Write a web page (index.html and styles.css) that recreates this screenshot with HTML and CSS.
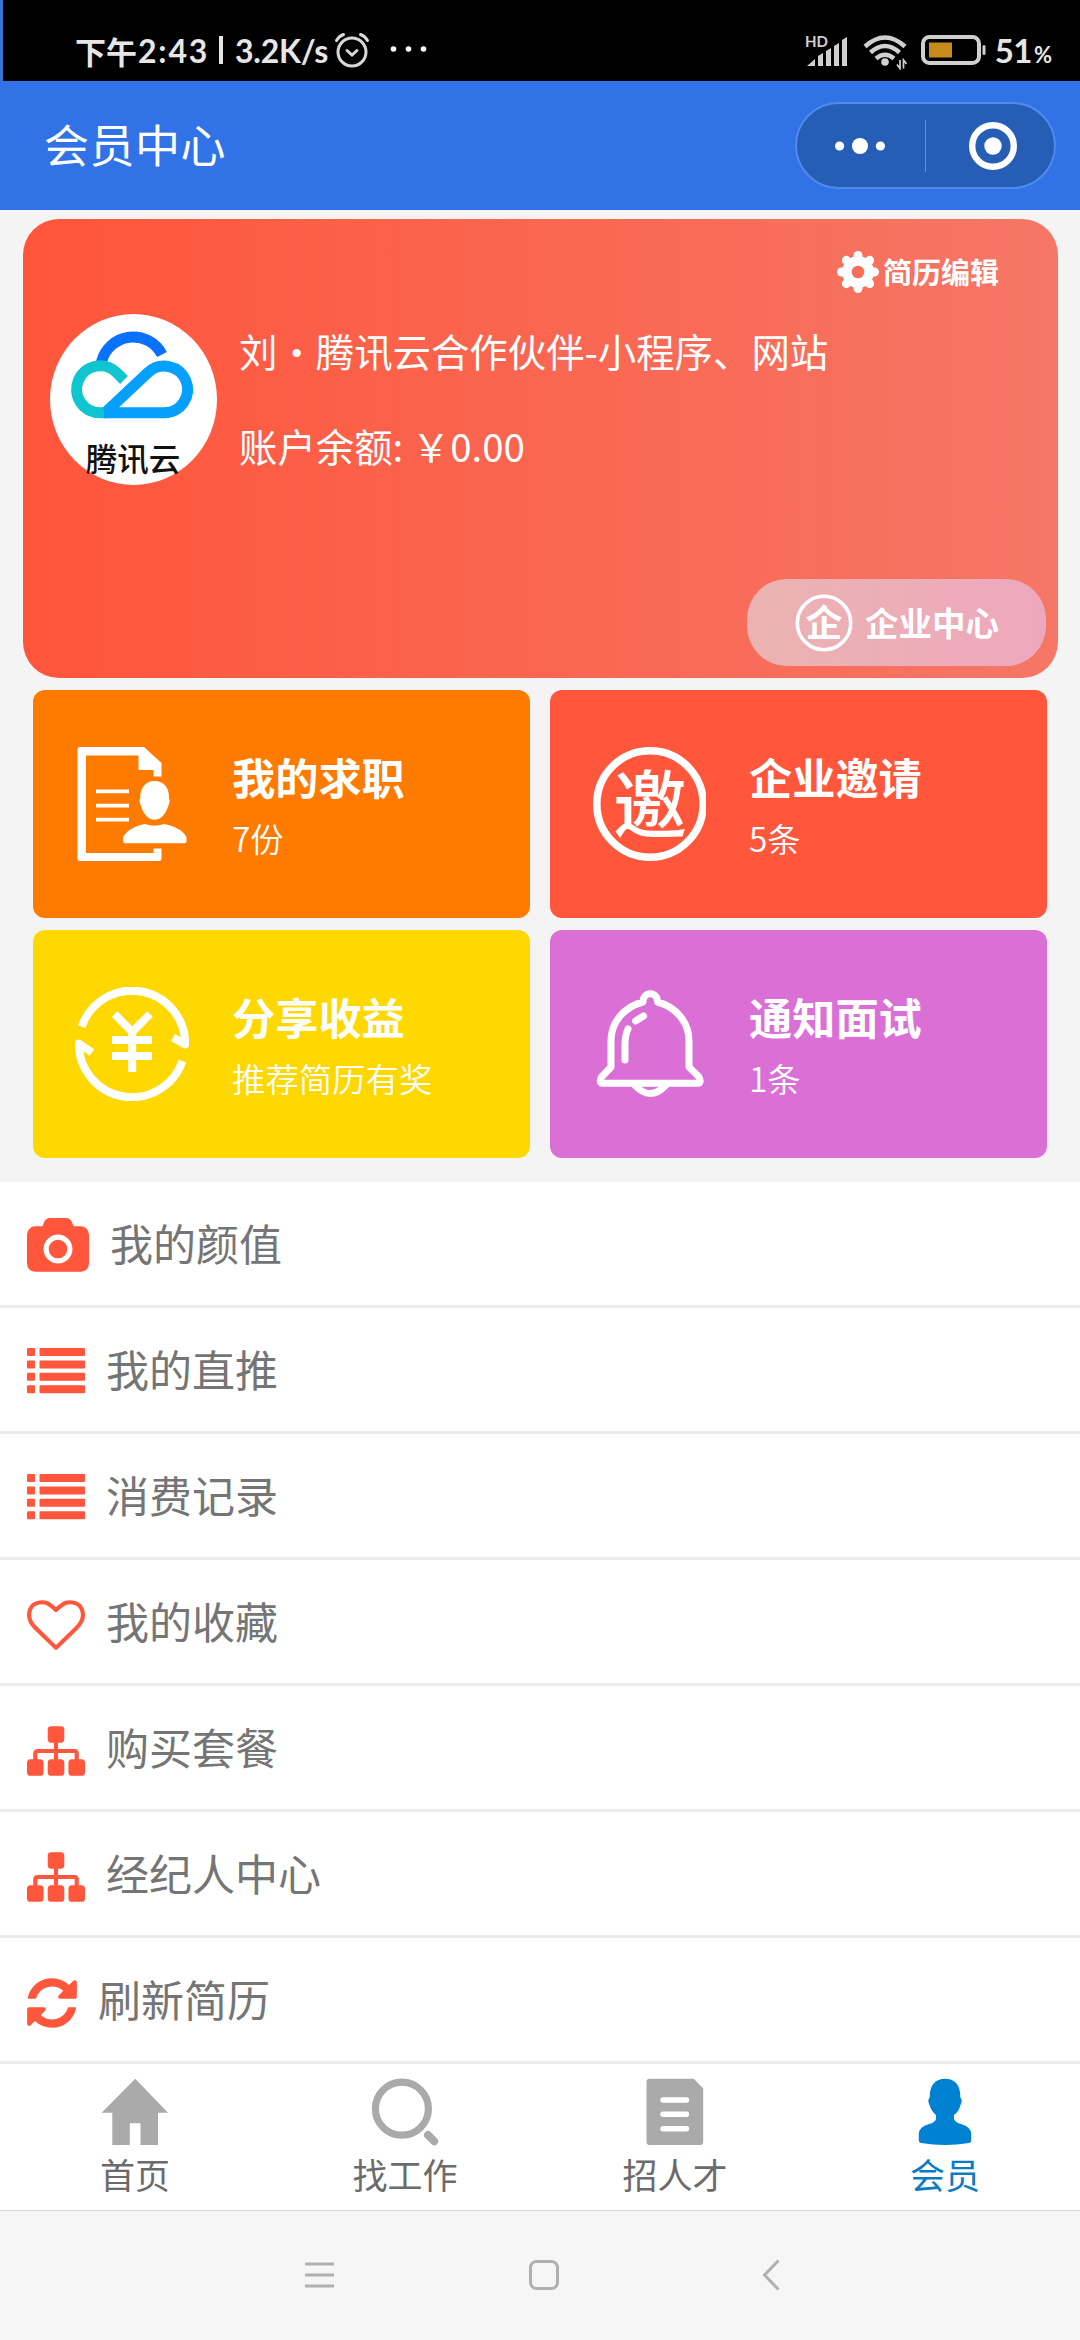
FILE: index.html
```html
<!DOCTYPE html>
<html lang="zh-CN">
<head>
<meta charset="utf-8">
<title>会员中心</title>
<link rel="stylesheet" href="styles.css">
</head>
<body>
<div class="screen">
  <header class="status">
    <div class="status-left">
      <span class="status-cn">下午</span><span class="status-time">2:43</span><span class="status-bar"></span><span class="status-speed">3.2K/s</span>
      <svg class="alarm" width="36" height="38" viewBox="0 0 36 38" fill="none" stroke="#d8d8d8" stroke-width="3" stroke-linecap="round"><circle cx="18" cy="21" r="14"/><path d="M13 19.500l5 4.500 5-4.500M2.500 9.500Q5 5 9.500 3.500M33.500 9.500Q31 5 26.500 3.500"/></svg>
      <svg class="more" width="38" height="6" viewBox="0 0 38 6" fill="#fff"><circle cx="3.500" cy="3" r="2.800"/><circle cx="18.500" cy="3" r="2.800"/><circle cx="33.500" cy="3" r="2.800"/></svg>
    </div>
    <div class="status-right">
      <svg class="signal" width="44" height="40" viewBox="0 -8 44 40" fill="#d0d0d0"><text class="hd" x="0" y="12">HD</text><path d="M2 31L10 24V31ZM13 21l5-3V31H13ZM21 16l5-3V31H21ZM29 11l5-3V31H29ZM37 5l5-3V31H37Z"/></svg>
      <svg class="wifi" width="44" height="36" viewBox="0 0 44 36" fill="none" stroke="#d0d0d0" stroke-width="4.500"><path d="M2 12.500Q22-5.500 42 12.500M7.500 18.500Q22 5.500 36.500 18.500M13 24.500Q22 17 31 24.500"/><circle cx="22" cy="28" r="3.800" fill="#d0d0d0" stroke="none"/><path stroke-width="1.700" d="M37 26v8.500l-3-4M40.500 34.500V26l3 4"/></svg>
      <svg class="battery" width="66" height="30" viewBox="0 0 66 30"><rect x="2" y="2" width="56" height="26" rx="6.500" fill="none" stroke="#cfcfcf" stroke-width="4"/><rect x="8" y="7.500" width="23" height="15" fill="#c88a1d"/><rect x="61.500" y="10" width="3" height="10" rx="1.500" fill="#cfcfcf"/></svg>
      <span class="level">51</span><span class="percent">%</span>
    </div>
  </header>

  <div class="titlebar">
    <h1 class="title">会员中心</h1>
    <div class="capsule">
      <svg class="caps-more" width="50" height="18" viewBox="0 0 50 18" fill="#fff"><circle cx="4.600" cy="9" r="4.600"/><circle cx="25" cy="9" r="8"/><circle cx="45.400" cy="9" r="4.600"/></svg>
      <span class="caps-line"></span>
      <svg class="caps-target" width="50" height="50" viewBox="0 0 50 50"><circle cx="25" cy="25" r="20.800" fill="none" stroke="#fff" stroke-width="6.400"/><circle cx="25" cy="25" r="8.700" fill="#fff"/></svg>
    </div>
  </div>

  <main class="content">
    <section class="profile">
      <a class="edit">
        <svg width="42" height="42" viewBox="0 0 42 42"><g fill="#fff"><circle cx="21" cy="21" r="16"/><rect x="16.500" y="0" width="9" height="42" rx="4.500"/><rect x="0" y="16.500" width="42" height="9" rx="4.500"/><g transform="rotate(45 21 21)"><rect x="16.500" y="0" width="9" height="42" rx="4.500"/><rect x="0" y="16.500" width="42" height="9" rx="4.500"/></g></g><circle cx="21" cy="21" r="6.300" fill="#f66e5c"/></svg>
        <span>简历编辑</span>
      </a>
      <div class="person">
        <svg class="avatar" width="167" height="171" viewBox="0 0 167 171">
          <ellipse cx="83.500" cy="85.500" rx="83.500" ry="85.500" fill="#fff"/>
          <g fill="none" stroke-width="11">
            <path stroke="#0872ff" d="M51.500 48A32.500 32.500 0 0 1 112 40.500"/>
            <path stroke="#0fc5d0" d="M74 66L67.500 59.500A23.500 23.500 0 1 0 50.500 98.800H56"/>
            <path stroke="#05a0fc" d="M54 98.800H114.500A23.400 23.400 0 1 0 98 58.500L56 98"/>
          </g>
          <text class="avatar-text" x="83" y="156.500">腾讯云</text>
        </svg>
        <div class="lines">
          <p class="line">刘・腾讯云合作伙伴-小程序、网站</p>
          <p class="line">账户余额: ￥0.00</p>
        </div>
      </div>
      <a class="company">
        <svg width="58" height="58" viewBox="0 0 58 58"><circle cx="29" cy="29" r="26.700" fill="none" stroke="#fff" stroke-width="3.600"/><text class="company-mark" x="29" y="42.500">企</text></svg>
        <span>企业中心</span>
      </a>
    </section>

    <section class="tiles">
      <a class="tile tile-orange">
        <svg width="114" height="114" viewBox="0 0 114 114" fill="#fff"><path fill-rule="evenodd" d="M5 0H69L86.500 16V29.500H78.500V23H63.500V8.500H11V106H78.500V101.500H86.500V111.500Q86.500 114 84 114H5Q2.500 114 2.500 111.500V2.500Q2.500 0 5 0Z"/><path d="M21 42.500h33v3.800H21zM21 56.700h33v3.800H21zM21 70.700h33v3.800H21zM79.600 34C90 34 94.500 42 94 52Q95.500 53 93.500 58.500C90 69 85 72.700 79.600 72.700S69 69 65.700 58.500Q63.500 53 65.200 52C64.800 42 69.500 34 79.600 34ZM70 77Q79.500 80.500 89 77C99 79 107 82.500 111.500 90V94.300Q111.500 96.300 109.500 96.300H50Q48 96.300 48 94.300V90C53 82.500 60 79 70 77Z"/></svg>
        <div><h2>我的求职</h2><p>7份</p></div>
      </a>
      <a class="tile tile-red">
        <svg width="114" height="114" viewBox="0 0 114 114"><circle cx="58" cy="57" r="53.200" fill="none" stroke="#fff" stroke-width="7.600"/><text class="invite-mark" x="58" y="85">邀</text></svg>
        <div><h2>企业邀请</h2><p>5条</p></div>
      </a>
      <a class="tile tile-gold">
        <svg width="114" height="114" viewBox="0 0 114 114" fill="none" stroke="#fff" stroke-width="8"><path d="M6.700 39.600A53.200 53.200 0 0 1 110.200 57.500L98 50.500M107.400 74A53.200 53.200 0 0 1 3.800 56.500L17 65.500" stroke-linejoin="round"/><path d="M39.500 27L57.200 45 75 27M57.200 43V85M37 53H77M37 69H77"/></svg>
        <div><h2>分享收益</h2><p>推荐简历有奖</p></div>
      </a>
      <a class="tile tile-orchid">
        <svg width="114" height="114" viewBox="0 0 114 114" fill="none" stroke="#fff" stroke-width="7" stroke-linejoin="round" stroke-linecap="round"><path d="M51 15C51 4 65.500 4 65.500 15C84 20 97 35 97 54V80L107 90Q110 96 105.500 96.300H11Q6.500 96 9.500 90L19 80V54C19 35 32 20 51 15ZM42.500 98Q58 115 74 98"/><path d="M33 73V58Q33 48 36 42M43.500 34L51.500 29"/></svg>
        <div><h2>通知面试</h2><p>1条</p></div>
      </a>
    </section>

    <nav class="list">
      <a class="row"><svg width="62" height="58" viewBox="0 0 1920 1792"><path d="M960 672q119 0 203.500 84.500t84.500 203.500-84.500 203.500-203.500 84.500-203.500-84.500-84.500-203.500 84.500-203.500 203.500-84.500zm704-416q106 0 181 75t75 181v896q0 106-75 181t-181 75h-1408q-106 0-181-75t-75-181v-896q0-106 75-181t181-75h224l51-136q19-49 69.500-84.500t103.500-35.500h512q53 0 103.500 35.500t69.500 84.500l51 136h224zm-704 1152q185 0 316.500-131.500t131.500-316.500-131.500-316.500-316.500-131.500-316.500 131.500-131.500 316.500 131.500 316.500 316.500 131.500z"/></svg><span>我的颜值</span></a>
      <a class="row"><svg width="58" height="58" viewBox="0 2 58 58"><path d="M1 6h6q1 0 1 1v6q0 1-1 1H1q-1 0-1-1V7q0-1 1-1zM1 18.400h6q1 0 1 1v6q0 1-1 1H1q-1 0-1-1v-6q0-1 1-1zM1 30.800h6q1 0 1 1v6q0 1-1 1H1q-1 0-1-1v-6q0-1 1-1zM1 43.200h6q1 0 1 1v6q0 1-1 1H1q-1 0-1-1v-6q0-1 1-1zM13.500 6H57q1 0 1 1v6q0 1-1 1H13.500q-1 0-1-1V7q0-1 1-1zM13.500 18.400H57q1 0 1 1v6q0 1-1 1H13.500q-1 0-1-1v-6q0-1 1-1zM13.500 30.800H57q1 0 1 1v6q0 1-1 1H13.500q-1 0-1-1v-6q0-1 1-1zM13.500 43.200H57q1 0 1 1v6q0 1-1 1H13.500q-1 0-1-1v-6q0-1 1-1z"/></svg><span>我的直推</span></a>
      <a class="row"><svg width="58" height="58" viewBox="0 2 58 58"><path d="M1 6h6q1 0 1 1v6q0 1-1 1H1q-1 0-1-1V7q0-1 1-1zM1 18.400h6q1 0 1 1v6q0 1-1 1H1q-1 0-1-1v-6q0-1 1-1zM1 30.800h6q1 0 1 1v6q0 1-1 1H1q-1 0-1-1v-6q0-1 1-1zM1 43.200h6q1 0 1 1v6q0 1-1 1H1q-1 0-1-1v-6q0-1 1-1zM13.500 6H57q1 0 1 1v6q0 1-1 1H13.500q-1 0-1-1V7q0-1 1-1zM13.500 18.400H57q1 0 1 1v6q0 1-1 1H13.500q-1 0-1-1v-6q0-1 1-1zM13.500 30.800H57q1 0 1 1v6q0 1-1 1H13.500q-1 0-1-1v-6q0-1 1-1zM13.500 43.200H57q1 0 1 1v6q0 1-1 1H13.500q-1 0-1-1v-6q0-1 1-1z"/></svg><span>消费记录</span></a>
      <a class="row"><svg width="58" height="58" viewBox="0 0 1792 1792"><path d="M1664 596q0-81-21.500-143t-55-98.500-81.500-59.500-94-31-98-8-112 25.500-110.500 64-86.500 72-60 61.500q-18 22-49 22t-49-22q-24-28-60-61.500t-86.500-72-110.500-64-112-25.500-98 8-94 31-81.500 59.500-55 98.500-21.500 143q0 168 187 355l581 560 580-559q188-188 188-356zm128 0q0 221-229 450l-623 600q-18 18-44 18t-44-18l-624-602q-10-8-27.500-26t-55.500-65.500-68-97.500-53.500-121-23.500-138q0-220 127-344t351-124q62 0 126.500 21.500t120 58 95.500 68.500 76 68q36-36 76-68t95.500-68.500 120-58 126.500-21.500q224 0 351 124t127 344z"/></svg><span>我的收藏</span></a>
      <a class="row"><svg width="58" height="58" viewBox="0 0 1792 1792"><path d="M1792 1248v320q0 40-28 68t-68 28h-320q-40 0-68-28t-28-68v-320q0-40 28-68t68-28h96v-192h-512v192h96q40 0 68 28t28 68v320q0 40-28 68t-68 28h-320q-40 0-68-28t-28-68v-320q0-40 28-68t68-28h96v-192h-512v192h96q40 0 68 28t28 68v320q0 40-28 68t-68 28h-320q-40 0-68-28t-28-68v-320q0-40 28-68t68-28h96v-192q0-52 38-90t90-38h512v-192h-96q-40 0-68-28t-28-68v-320q0-40 28-68t68-28h320q40 0 68 28t28 68v320q0 40-28 68t-68 28h-96v192h512q52 0 90 38t38 90v192h96q40 0 68 28t28 68z"/></svg><span>购买套餐</span></a>
      <a class="row"><svg width="58" height="58" viewBox="0 0 1792 1792"><path d="M1792 1248v320q0 40-28 68t-68 28h-320q-40 0-68-28t-28-68v-320q0-40 28-68t68-28h96v-192h-512v192h96q40 0 68 28t28 68v320q0 40-28 68t-68 28h-320q-40 0-68-28t-28-68v-320q0-40 28-68t68-28h96v-192h-512v192h96q40 0 68 28t28 68v320q0 40-28 68t-68 28h-320q-40 0-68-28t-28-68v-320q0-40 28-68t68-28h96v-192q0-52 38-90t90-38h512v-192h-96q-40 0-68-28t-28-68v-320q0-40 28-68t68-28h320q40 0 68 28t28 68v320q0 40-28 68t-68 28h-96v192h512q52 0 90 38t38 90v192h96q40 0 68 28t28 68z"/></svg><span>经纪人中心</span></a>
      <a class="row"><svg width="50" height="58" viewBox="128 0 1536 1792"><path d="M1639 1056q0 5-1 7-64 268-268 434.500t-478 166.500q-146 0-282.500-55t-243.500-157l-129 129q-19 19-45 19t-45-19-19-45v-448q0-26 19-45t45-19h448q26 0 45 19t19 45-19 45l-137 137q71 66 161 102t187 36q134 0 250-65t186-179q11-17 53-117 8-23 30-23h192q13 0 22.500 9.500t9.500 22.500zm25-800v448q0 26-19 45t-45 19h-448q-26 0-45-19t-19-45 19-45l138-138q-148-137-349-137-134 0-250 65t-186 179q-11 17-53 117-8 23-30 23h-199q-13 0-22.500-9.500t-9.500-22.500v-7q65-268 270-434.500t480-166.500q146 0 284 55.500t245 156.500l130-129q19-19 45-19t45 19 19 45z"/></svg><span>刷新简历</span></a>
    </nav>
  </main>

  <nav class="tabs">
    <a class="tab"><svg width="68" height="68" viewBox="0 0 68 68" fill="#aaa"><path d="M34.300 .7L67 34.700H57V67H39.500V45.300H28.800V67H11.300V34.700H.6Z"/></svg><span>首页</span></a>
    <a class="tab"><svg width="68" height="68" viewBox="0 0 68 68" fill="none" stroke="#aaa"><circle cx="30.900" cy="30.700" r="26.500" stroke-width="7.200"/><path d="M57 57l6.200 6.300" stroke-width="8" stroke-linecap="round"/></svg><span>找工作</span></a>
    <a class="tab"><svg width="68" height="68" viewBox="0 0 68 68"><path fill="#aaa" d="M8.500 .7H52.600L62.200 10.300V64Q62.200 67 59.200 67H8.500Q5.500 67 5.500 64V3.700Q5.500 .7 8.500 .7Z"/><path d="M22 22H45.500M22 36.300H45.500M22 50.700H45.500" stroke="#fff" stroke-width="5.400" stroke-linecap="round"/></svg><span>招人才</span></a>
    <a class="tab tab-active"><svg width="68" height="68" viewBox="0 0 68 68" fill="#0081d1"><path d="M34 .7C43.500 .7 49.800 7 49.300 19.500Q52 22 49.500 27Q48 33.500 43 37V41Q44.500 44.500 50 46Q60.200 49 60.200 56V62.500Q60.200 64.500 58 65Q34 69 10 65Q7.800 64.500 7.800 62.500V56Q7.800 49 18 46Q24 44.500 25 41V37Q20.500 33.500 18.500 27Q16 22 18.700 19.500C18.500 7 24.500 .7 34 .7Z"/></svg><span>会员</span></a>
  </nav>

  <footer class="sysnav">
    <svg width="30" height="32" viewBox="0 0 30 32" stroke="#b0b0b0" stroke-width="3"><path d="M1 5H30M1 16H30M1 27H30"/></svg>
    <svg class="nav-home" width="32" height="32" viewBox="0 0 32 32" fill="none" stroke="#b0b0b0" stroke-width="3"><rect x="2.500" y="2.500" width="27" height="27" rx="6"/></svg>
    <svg class="nav-back" width="18" height="32" viewBox="0 0 18 32" fill="none" stroke="#b0b0b0" stroke-width="3"><path d="M16.500 1.500L2.500 16l14 14.500"/></svg>
  </footer>
</div>
</body>
</html>
```
FILE: styles.css
```css
* { box-sizing: border-box; margin: 0; padding: 0; }
body {
  width: 1080px;
  background: #f4f4f4;
  font-family: "Noto Sans CJK SC", sans-serif;
}
svg { display: block; flex: none; }
.screen { width: 1080px; height: 2340px; display: flex; flex-direction: column; overflow: hidden; }

/* status bar */
.status {
  height: 81px;
  background: #000;
  border-left: 3px solid #3b74d0;
  display: flex;
  justify-content: space-between;
  color: #e6e6e6;
  padding: 20px 28px 0 72px;
}
.status-left, .status-right { display: flex; align-items: center; height: 60px; white-space: nowrap; }
.status-cn { font-size: 31px; font-weight: 700; }
.status-time, .status-speed { font-family: Lato, sans-serif; font-weight: 700; font-size: 32px; }
.status-time { width: 71px; letter-spacing: 1.8px; padding-left: 1px; }
.status-speed { width: 92px; letter-spacing: -0.2px; }
.status-bar { width: 4px; height: 28px; background: #e6e6e6; margin: 0 12px 0 11px; }
.alarm { margin: 0 20px 0 7px; }
.more { margin-bottom: 2px; }
.signal { margin: 0 14px 6px 0; }
.hd { font: 700 15px Lato, sans-serif; }
.wifi { margin: 4px 14px 0 0; }
.battery { margin: 0 8px 1px 0; }
.level { font: 700 33px Lato, sans-serif; letter-spacing: -0.5px; }
.percent { font: 700 22px Lato, sans-serif; margin: 8px 0 0 2px; }

/* mini program title bar */
.titlebar {
  height: 129px;
  background: #3173e6;
  display: flex;
  align-items: center;
  justify-content: space-between;
  padding: 0 24px 0 44px;
}
.title { font-size: 45px; font-weight: 400; letter-spacing: 0.5px; color: #fff; line-height: 60px; padding-bottom: 3px; }
.capsule {
  width: 261px;
  height: 87px;
  border: 2px solid #4f8aec;
  border-radius: 44px;
  background: #265eb6;
  display: flex;
  align-items: center;
}
.caps-more { margin-left: 38px; }
.caps-line { width: 1px; height: 52px; background: #5a8fe6; margin: 0 42px 0 40px; }

/* profile card */
.content { display: flex; flex-direction: column; }
.profile {
  margin: 9px 22px 0 23px;
  height: 459px;
  border-radius: 36px;
  background: linear-gradient(90deg, #ff553b, #f57766);
  color: #fff;
  display: flex;
  flex-direction: column;
  padding: 32px 12px 12px 27px;
}
.edit {
  align-self: flex-end;
  display: flex;
  align-items: center;
  gap: 4px;
  height: 42px;
  margin-right: 47px;
  font-size: 29px;
  font-weight: 700;
}
.edit span { padding-bottom: 3px; }
.person { display: flex; gap: 22px; margin-top: 21px; }
.lines { padding-top: 6px; }
.line { font-size: 38.4px; line-height: 60px; margin-bottom: 35px; white-space: nowrap; }
.avatar-text { font-size: 31.500px; font-weight: 500; text-anchor: middle; fill: #111; }
.company {
  align-self: flex-end;
  margin-top: auto;
  width: 299px;
  height: 87px;
  border-radius: 40px;
  background: linear-gradient(90deg, #ebb3b1, #eea8bd);
  display: flex;
  align-items: center;
  padding-left: 48px;
  gap: 12px;
  font-size: 33.5px;
  font-weight: 700;
}
.company span { padding-bottom: 2px; }
.company-mark { font-size: 37px; font-weight: 700; text-anchor: middle; fill: #fff; }

/* feature tiles */
.tiles {
  display: grid;
  grid-template-columns: 497px 497px;
  grid-auto-rows: 228px;
  gap: 12px 20px;
  margin: 12px 33px 24px;
}
.tile { border-radius: 12px; display: flex; align-items: center; gap: 43px; padding-left: 42px; color: #fff; }
.tile div { padding-top: 6px; }
.tile h2 { font-size: 43.2px; font-weight: 700; line-height: 62px; }
.tile p { font-size: 33.4px; font-weight: 350; line-height: 62px; }
.tile-orange { background: #ff7b00; }
.tile-red { background: #ff563c; }
.tile-gold { background: #fed800; }
.tile-orchid { background: #da70d6; }
.invite-mark { font-size: 74px; font-weight: 500; text-anchor: middle; fill: #fff; }

/* menu list */
.row {
  height: 126px;
  background: #fff;
  border-bottom: 3px solid #ebebeb;
  display: flex;
  align-items: center;
  gap: 21px;
  padding-left: 27px;
  font-size: 43px;
  color: #757575;
}
.row svg { fill: #ff563c; margin-top: 6px; }
.row span { padding-bottom: 3px; }

/* bottom tabs */
.tabs { height: 147px; background: #fff; border-bottom: 1px solid #d4d4d4; display: grid; grid-template-columns: repeat(4, 1fr); }
.tab { display: flex; flex-direction: column; align-items: center; padding-top: 14px; font-size: 35px; line-height: 56px; color: #6b6b6b; }
.tab-active { color: #0a7cc4; }

/* system navigation */
.sysnav {
  flex: 1;
  background: #f6f6f6;
  display: flex;
  align-items: center;
  padding: 0 0 2px 304px;
}
.nav-home { margin-left: 194px; }
.nav-back { margin-left: 202px; }
```
